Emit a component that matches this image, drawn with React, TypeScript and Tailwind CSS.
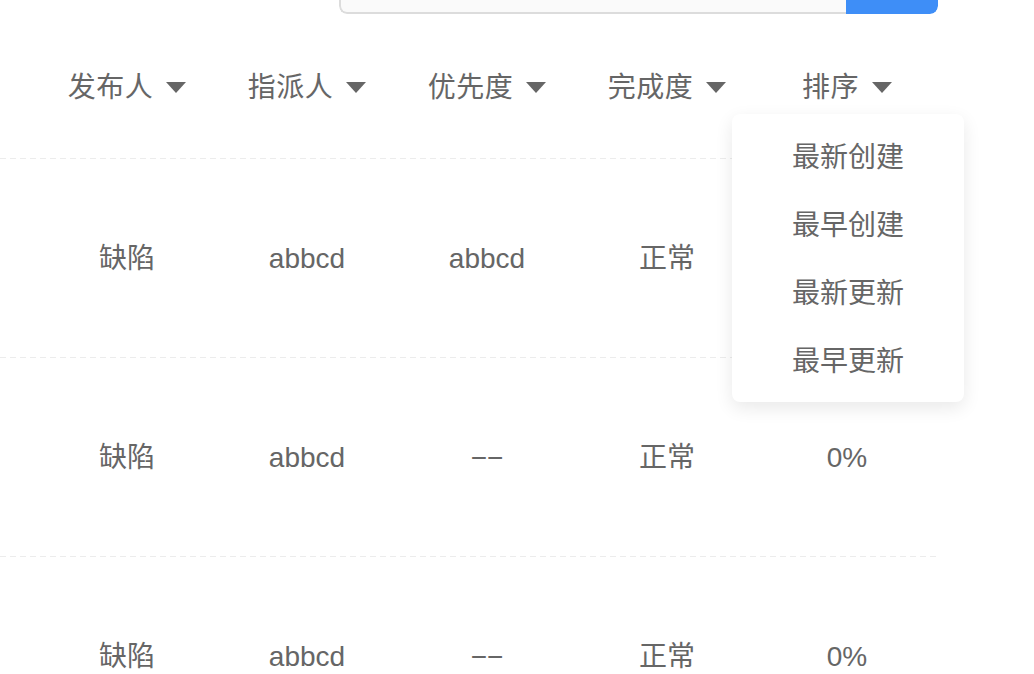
import React from 'react';

const headers = ['发布人', '指派人', '优先度', '完成度', '排序'];

const rows = [
  ['缺陷', 'abbcd', 'abbcd', '正常', '0%'],
  ['缺陷', 'abbcd', '−−', '正常', '0%'],
  ['缺陷', 'abbcd', '−−', '正常', '0%'],
];

const sortOptions = ['最新创建', '最早创建', '最新更新', '最早更新'];

function Caret() {
  return (
    <svg width="20" height="11" viewBox="0 0 20 11" className="ml-[13px] shrink-0">
      <polygon points="0,0 20,0 10,11" fill="#666666" />
    </svg>
  );
}

function Divider() {
  return (
    <div className="h-px w-full bg-[repeating-linear-gradient(to_right,#ececec_0px,#ececec_6px,transparent_6px,transparent_10px)]" />
  );
}

export default function App() {
  return (
    <div className="relative h-[674px] w-[1034px] overflow-hidden bg-white font-['Liberation_Sans','Noto_Sans_CJK_SC',sans-serif] text-[#666666]">
      {/* search bar, cut off by the top edge */}
      <div className="flex h-[14px] w-[938px] items-end overflow-hidden pl-[339px]">
        <div className="flex h-[60px] w-full shrink-0 overflow-hidden rounded-lg">
          <div className="flex-1 rounded-l-lg border-2 border-r-0 border-[#dcdcdc] bg-[#fafafa]" />
          <div className="w-[92px] rounded-r-lg bg-[#3e8ef7]" />
        </div>
      </div>

      <div className="w-[938px]">
        <div className="grid h-[144px] grid-cols-[repeat(5,180px)] items-center pl-[37px] pt-[3px]">
          {headers.map((h) => (
            <div key={h} className="flex items-center justify-center text-[28px] leading-none">
              <span className="tracking-[0.5px]">{h}</span>
              <Caret />
            </div>
          ))}
        </div>

        {rows.map((r, i) => (
          <div key={i}>
            <Divider />
            <div className="grid h-[198px] grid-cols-[repeat(5,180px)] items-center pl-[37px] pt-[2px]">
              {r.map((c, j) => (
                <div key={j} className="text-center text-[28px] leading-none">
                  {c}
                </div>
              ))}
            </div>
          </div>
        ))}
      </div>

      {/* sort dropdown */}
      <div className="absolute left-[732px] top-[114px] w-[232px] rounded-lg bg-white py-2 shadow-[0_6px_18px_rgba(0,0,0,0.09)]">
        {sortOptions.map((o) => (
          <div key={o} className="flex h-[68px] items-center justify-center pt-[3px] text-[28px] leading-none">
            {o}
          </div>
        ))}
      </div>
    </div>
  );
}
